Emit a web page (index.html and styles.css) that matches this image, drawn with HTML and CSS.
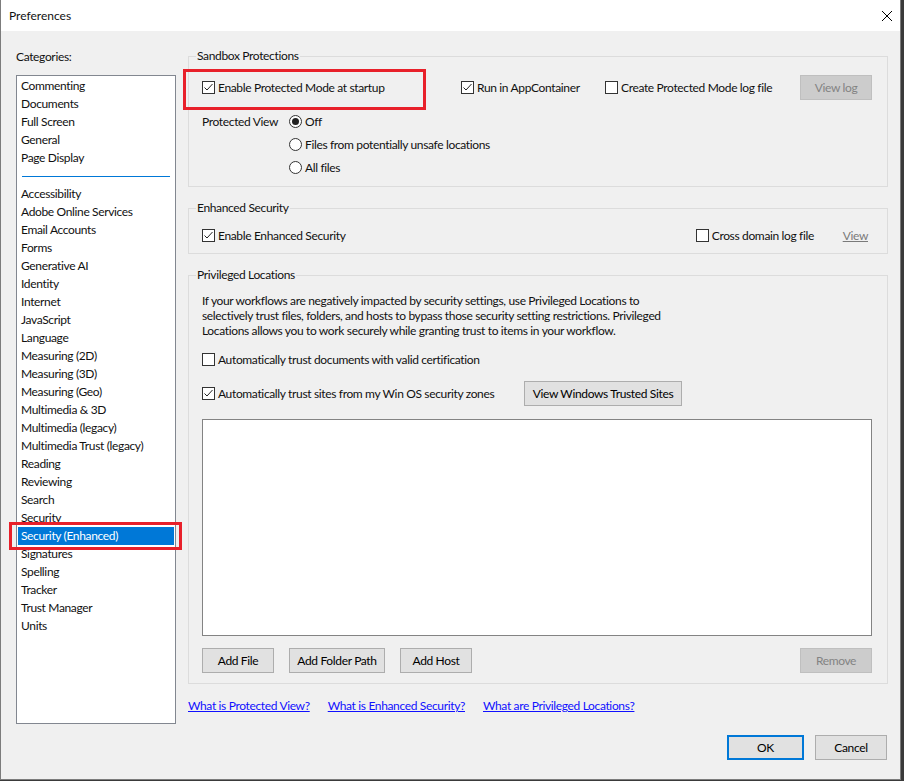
FILE: index.html
```html
<!DOCTYPE html>
<html lang="en">
<head>
    <meta charset="UTF-8">
    <title>Preferences</title>
    <link rel="stylesheet" href="styles.css">
</head>
<body>
    <div class="window">
        <div class="titlebar">
            <span class="title">Preferences</span>
            <svg class="close" width="10" height="10" viewBox="0 0 10 10"><path d="M0 0L10 10M10 0L0 10" stroke="#000" stroke-width="1"/></svg>
        </div>
        <div class="dialog">
            <div class="categories">
                <div class="cat-label">Categories:</div>
                <ul class="listbox">
                    <li>Commenting</li>
                    <li>Documents</li>
                    <li>Full Screen</li>
                    <li>General</li>
                    <li>Page Display</li>
                    <li class="separator"></li>
                    <li>Accessibility</li>
                    <li>Adobe Online Services</li>
                    <li>Email Accounts</li>
                    <li>Forms</li>
                    <li>Generative AI</li>
                    <li>Identity</li>
                    <li>Internet</li>
                    <li>JavaScript</li>
                    <li>Language</li>
                    <li>Measuring (2D)</li>
                    <li>Measuring (3D)</li>
                    <li>Measuring (Geo)</li>
                    <li>Multimedia &amp; 3D</li>
                    <li>Multimedia (legacy)</li>
                    <li>Multimedia Trust (legacy)</li>
                    <li>Reading</li>
                    <li>Reviewing</li>
                    <li>Search</li>
                    <li>Security</li>
                    <li class="selected marked">Security (Enhanced)</li>
                    <li>Signatures</li>
                    <li>Spelling</li>
                    <li>Tracker</li>
                    <li>Trust Manager</li>
                    <li>Units</li>
                </ul>
            </div>

            <div class="panel">
                <div class="group sandbox">
                    <div class="group-title">Sandbox Protections</div>
                    <div class="row">
                        <label class="check marked-check w-protected"><span class="box"><svg width="11" height="11" viewBox="0 0 11 11"><path d="M1.5 5.5L4 8L9.5 2" fill="none" stroke="#222" stroke-width="1"/></svg></span>Enable Protected Mode at startup</label>
                        <label class="check w-container"><span class="box"><svg width="11" height="11" viewBox="0 0 11 11"><path d="M1.5 5.5L4 8L9.5 2" fill="none" stroke="#222" stroke-width="1"/></svg></span>Run in AppContainer</label>
                        <label class="check"><span class="box"></span>Create Protected Mode log file</label>
                        <button class="btn disabled push-right">View log</button>
                    </div>
                    <div class="view-row">
                        <div class="view-label">Protected View</div>
                        <div class="radios">
                            <label class="radio"><span class="dot on"></span>Off</label>
                            <label class="radio"><span class="dot"></span>Files from potentially unsafe locations</label>
                            <label class="radio"><span class="dot"></span>All files</label>
                        </div>
                    </div>
                </div>

                <div class="group enhanced">
                    <div class="group-title">Enhanced Security</div>
                    <div class="row">
                        <label class="check w-enhanced"><span class="box"><svg width="11" height="11" viewBox="0 0 11 11"><path d="M1.5 5.5L4 8L9.5 2" fill="none" stroke="#222" stroke-width="1"/></svg></span>Enable Enhanced Security</label>
                        <label class="check w-cross"><span class="box"></span>Cross domain log file</label>
                        <a class="link-disabled">View</a>
                    </div>
                </div>

                <div class="group privileged">
                    <div class="group-title">Privileged Locations</div>
                    <p class="info">If your workflows are negatively impacted by security settings, use Privileged Locations to<br>selectively trust files, folders, and hosts to bypass those security setting restrictions. Privileged<br>Locations allows you to work securely while granting trust to items in your workflow.</p>
                    <label class="check cert"><span class="box"></span>Automatically trust documents with valid certification</label>
                    <div class="row sites">
                        <label class="check w-sites"><span class="box"><svg width="11" height="11" viewBox="0 0 11 11"><path d="M1.5 5.5L4 8L9.5 2" fill="none" stroke="#222" stroke-width="1"/></svg></span>Automatically trust sites from my Win OS security zones</label>
                        <button class="btn wide">View Windows Trusted Sites</button>
                    </div>
                    <div class="locations"></div>
                    <div class="row actions">
                        <button class="btn">Add File</button>
                        <button class="btn folder">Add Folder Path</button>
                        <button class="btn">Add Host</button>
                        <button class="btn disabled push-right">Remove</button>
                    </div>
                </div>

                <div class="links">
                    <a href="#">What is Protected View?</a>
                    <a href="#">What is Enhanced Security?</a>
                    <a href="#">What are Privileged Locations?</a>
                </div>

                <div class="footer">
                    <button class="btn default">OK</button>
                    <button class="btn">Cancel</button>
                </div>
            </div>
        </div>
    </div>
</body>
</html>
```

FILE: styles.css
```css
* {
    box-sizing: border-box;
}
body {
    margin: 0;
    background-color: #3a3a3a;
    font-family: Lato, "Noto Sans", sans-serif;
    font-size: 12px;
    letter-spacing: -0.35px;
    color: #111;
}
.window {
    width: 901px;
    height: 780px;
    background-color: #F0F0F0;
    border: 1px solid #7c7c7c;
    border-top: none;
    display: flex;
    flex-direction: column;
}
.titlebar {
    height: 31px;
    background-color: #fff;
    display: flex;
    align-items: center;
    padding-left: 8px;
    padding-right: 8px;
    flex-shrink: 0;
}
.title {
    font-size: 12px;
    letter-spacing: 0;
}
.close {
    margin-left: auto;
}
.dialog {
    display: grid;
    grid-template-columns: 160px 700px;
    column-gap: 12px;
    padding: 17px 0 0 15px;
}

/* left column: category list */
.cat-label {
    line-height: 18px;
}
.listbox {
    list-style: none;
    margin: 9px 0 0 0;
    padding: 1px;
    height: 649px;
    background-color: #fff;
    border: 1px solid #828790;
}
.listbox li {
    height: 18px;
    line-height: 18px;
    padding-left: 3px;
    white-space: nowrap;
}
.listbox li.separator {
    display: flex;
    align-items: center;
    padding: 0 4px;
}
.listbox li.separator::before {
    content: "";
    flex: 1;
    height: 1px;
    background-color: #0078D7;
}
.listbox li.selected {
    background-color: #0078D7;
    color: #fff;
}
.marked {
    position: relative;
}
.marked::after {
    content: "";
    position: absolute;
    left: -9px;
    right: -8px;
    top: -5px;
    bottom: -5px;
    border: 3px solid #E8202A;
}

/* right column */
.group {
    border: 1px solid #DCDCDC;
    padding: 0 15px 0 13px;
}
.group-title {
    margin: -9px 0 0 -6px;
    padding: 0 1px;
    width: fit-content;
    line-height: 16px;
    background-color: #F0F0F0;
}
.sandbox {
    margin-top: 8px;
    padding-bottom: 7px;
}
.enhanced {
    margin-top: 21px;
    padding-bottom: 9px;
    padding-right: 19px;
}
.privileged {
    margin-top: 21px;
    padding-bottom: 10px;
}
.row {
    display: flex;
    align-items: center;
}
.sandbox .row {
    margin-top: 11px;
}
.enhanced .row {
    margin-top: 10px;
}
.push-right {
    margin-left: auto;
}

.check {
    display: flex;
    align-items: center;
    gap: 3px;
    height: 18px;
    white-space: nowrap;
}
.box {
    width: 13px;
    height: 13px;
    border: 1px solid #333;
    background-color: #fff;
    display: flex;
    align-items: center;
    justify-content: center;
    flex-shrink: 0;
}
.marked-check {
    position: relative;
}
.marked-check::after {
    content: "";
    position: absolute;
    left: -19px;
    top: -10px;
    bottom: -13px;
    width: 237px;
    border: 3px solid #E8202A;
}
.w-protected { width: 259px; }
.w-container { width: 144px; }
.w-enhanced { width: 494px; }
.w-cross { width: 147px; }
.w-sites { width: 322px; }

.view-row {
    display: flex;
    margin-top: 10px;
}
.view-label {
    width: 87px;
    line-height: 23px;
}
.radio {
    display: flex;
    align-items: center;
    gap: 3px;
    height: 23px;
}
.dot {
    width: 13px;
    height: 13px;
    border: 1px solid #333;
    border-radius: 50%;
    background-color: #fff;
    display: flex;
    align-items: center;
    justify-content: center;
}
.dot.on::before {
    content: "";
    width: 7px;
    height: 7px;
    border-radius: 50%;
    background-color: #222;
}

.link-disabled {
    color: #7a7a7a;
    text-decoration: underline;
}

.info {
    margin: 10px 0 0 0;
    line-height: 15px;
    white-space: nowrap;
}
.cert {
    margin-top: 12px;
}
.sites {
    margin-top: 13px;
}
.locations {
    margin-top: 13px;
    height: 217px;
    background-color: #fff;
    border: 1px solid #838383;
}
.actions {
    margin-top: 12px;
    gap: 15px;
}

.btn {
    font-family: inherit;
    font-size: 12px;
    letter-spacing: -0.35px;
    white-space: nowrap;
    color: #000;
    height: 25px;
    min-width: 72px;
    padding: 0 4px;
    background-color: #E1E1E1;
    border: 1px solid #ADADAD;
}
.btn.wide {
    width: 158px;
}
.btn.folder {
    width: 96px;
}
.btn.disabled {
    background-color: #CCCCCC;
    border-color: #BFBFBF;
    color: #838383;
}
.btn.default {
    border: 2px solid #0078D7;
    width: 77px;
}

.links {
    display: flex;
    gap: 18px;
    margin-top: 14px;
    line-height: 16px;
}
.links a {
    color: #1010FF;
}

.footer {
    display: flex;
    justify-content: flex-end;
    gap: 11px;
    margin-top: 21px;
    margin-right: 1px;
}
```
